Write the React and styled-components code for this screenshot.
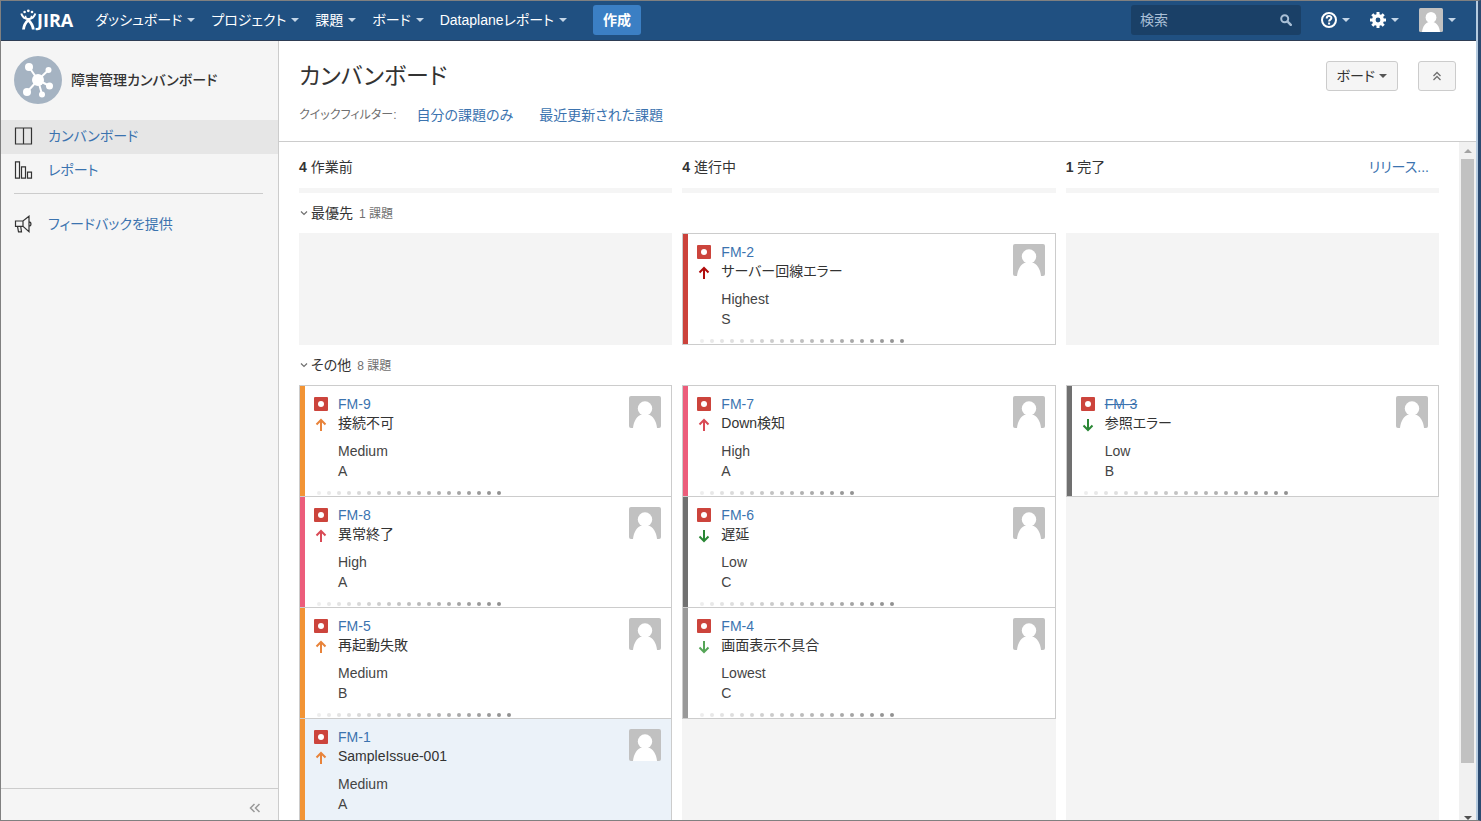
import React from "react";
import styled, { createGlobalStyle } from "styled-components";

const PRIORITIES = {
  highest: { bar: "#cb423b", arrow: "#b00c0c" },
  high: { bar: "#ec5d7b", arrow: "#d94a55" },
  medium: { bar: "#f29435", arrow: "#e8833a" },
  low: { bar: "#707070", arrow: "#2a8735" },
  lowest: { bar: "#999999", arrow: "#55a557" },
};

const NAV = ["ダッシュボード", "プロジェクト", "課題", "ボード", "Dataplaneレポート"];

const COLUMNS = [
  { count: 4, name: "作業前" },
  { count: 4, name: "進行中" },
  { count: 1, name: "完了", release: "リリース..." },
];

const SWIMLANES = [
  {
    name: "最優先",
    count: "1 課題",
    columns: [
      [],
      [{ id: "FM-2", summary: "サーバー回線エラー", priority: "Highest", rank: "S", days: 21 }],
      [],
    ],
  },
  {
    name: "その他",
    count: "8 課題",
    columns: [
      [
        { id: "FM-9", summary: "接続不可", priority: "Medium", rank: "A", days: 19 },
        { id: "FM-8", summary: "異常終了", priority: "High", rank: "A", days: 19 },
        { id: "FM-5", summary: "再起動失敗", priority: "Medium", rank: "B", days: 20 },
        { id: "FM-1", summary: "SampleIssue-001", priority: "Medium", rank: "A", days: 20, selected: true },
      ],
      [
        { id: "FM-7", summary: "Down検知", priority: "High", rank: "A", days: 16 },
        { id: "FM-6", summary: "遅延", priority: "Low", rank: "C", days: 20 },
        { id: "FM-4", summary: "画面表示不具合", priority: "Lowest", rank: "C", days: 20 },
      ],
      [{ id: "FM-3", summary: "参照エラー", priority: "Low", rank: "B", days: 21, done: true }],
    ],
  },
];

function App() {
  return (
    <>
      <GlobalStyle />
      <Window>
        <TopBar />
        <Body>
          <Sidebar />
          <Main>
            <BoardHeader />
            <BoardArea>
              <Board />
              <ScrollTrack>
                <ScrollArrow />
                <ScrollThumb />
                <ScrollArrow $down />
              </ScrollTrack>
            </BoardArea>
          </Main>
        </Body>
      </Window>
    </>
  );
}

export default App;

function TopBar() {
  return (
    <StyledTopBar>
      <Logo href="#home">
        <LogoMark />
        JIRA
      </Logo>
      <Nav>
        {NAV.map((label) => (
          <NavLink href="#menu" key={label}>
            {label}
            <Caret />
          </NavLink>
        ))}
      </Nav>
      <CreateButton type="button">作成</CreateButton>
      <Search>
        <SearchInput type="search" placeholder="検索" aria-label="検索" />
        <svg width="12" height="12" viewBox="0 0 12 12" fill="none" stroke="#a9bfd6" strokeWidth="2">
          <circle cx="4.7" cy="4.7" r="3.5" />
          <path d="M7.4 7.4l3.4 3.4" strokeWidth="2.4" strokeLinecap="round" />
        </svg>
      </Search>
      <IconMenu type="button" aria-label="ヘルプ">
        <HelpIcon />
        <Caret />
      </IconMenu>
      <IconMenu type="button" aria-label="管理">
        <GearIcon />
        <Caret />
      </IconMenu>
      <IconMenu type="button" aria-label="プロフィール">
        <Avatar size={24} />
        <Caret />
      </IconMenu>
    </StyledTopBar>
  );
}

function Sidebar() {
  return (
    <StyledSidebar>
      <Project>
        <ProjectIcon />
        <ProjectName>障害管理カンバンボード</ProjectName>
      </Project>
      <SideLink href="#board" $active>
        <svg width="19" height="18" viewBox="0 0 19 18" fill="none" stroke="#333">
          <path d="M1.500 1h16v16h-16zM9.500 1v16" strokeWidth="1.2" />
        </svg>
        カンバンボード
      </SideLink>
      <SideLink href="#reports">
        <svg width="19" height="18" viewBox="0 0 19 18" fill="none" stroke="#333">
          <path d="M1.500.8h4v16.400h-4zM7.500 5.800h4v11.400h-4zM13.500 11.200h4v6h-4z" strokeWidth="1.2" />
        </svg>
        レポート
      </SideLink>
      <Divider />
      <SideLink href="#feedback">
        <svg width="19" height="18" viewBox="0 0 19 18" fill="none" stroke="#333">
          <path d="M1.500 6h7.500l6-4.800v15.400l-6-5.200H1.500zM9 6v5.400M3.500 11.400l1 5.400h3l-.8-5.400M15 6.800c2.600 0 2.600 4.200 0 4.200" strokeWidth="1.2" />
        </svg>
        フィードバックを提供
      </SideLink>
      <SideFooter>
        <CollapseButton type="button" aria-label="サイドバーを折りたたむ">
          <svg width="12" height="10" viewBox="0 0 12 10" fill="none" stroke="#999" strokeWidth="1.5">
            <path d="M5.500 1L1.500 5l4 4M10.500 1l-4 4 4 4" />
          </svg>
        </CollapseButton>
      </SideFooter>
    </StyledSidebar>
  );
}

function BoardHeader() {
  return (
    <StyledBoardHeader>
      <TitleRow>
        <Title>カンバンボード</Title>
        <ToolButton type="button">
          ボード
          <Caret $dark />
        </ToolButton>
        <ToolButton type="button" aria-label="ヘッダーを隠す">
          <svg width="16" height="10" viewBox="0 0 16 10" fill="none" stroke="#707070" strokeWidth="1.3">
            <path d="M4.500 5L8 1.500 11.500 5M4.500 9L8 5.500 11.500 9" />
          </svg>
        </ToolButton>
      </TitleRow>
      <Filters>
        <FilterLabel>クイックフィルター:</FilterLabel>
        <FilterLinks>
          <TextLink href="#mine">自分の課題のみ</TextLink>
          <TextLink href="#recent">最近更新された課題</TextLink>
        </FilterLinks>
      </Filters>
    </StyledBoardHeader>
  );
}

function Board() {
  return (
    <StyledBoard>
      <Lane>
        {COLUMNS.map((column) => (
          <ColumnHeader key={column.name}>
            <ColumnName>
              <strong>{column.count}</strong> {column.name}
            </ColumnName>
            {column.release && <TextLink href="#release">{column.release}</TextLink>}
          </ColumnHeader>
        ))}
      </Lane>
      {SWIMLANES.map((lane) => (
        <section key={lane.name}>
          <LaneToggle type="button">
            <svg width="10" height="8" viewBox="0 0 10 8" fill="none" stroke="#707070" strokeWidth="1.2">
              <path d="M2 2.500l3 3 3-3" />
            </svg>
            {lane.name}
            <LaneCount>{lane.count}</LaneCount>
          </LaneToggle>
          <Lane>
            {lane.columns.map((issues, index) => (
              <Column key={index}>
                {issues.map((issue) => (
                  <IssueCard key={issue.id} issue={issue} />
                ))}
              </Column>
            ))}
          </Lane>
        </section>
      ))}
    </StyledBoard>
  );
}

function IssueCard({ issue }) {
  const level = issue.priority.toLowerCase();
  return (
    <Card $selected={issue.selected}>
      <Grabber $color={PRIORITIES[level].bar} />
      <CardContent>
        <CardTop>
          <CardIcons>
            <IncidentIcon />
            <PriorityArrow color={PRIORITIES[level].arrow} down={level.startsWith("low")} />
          </CardIcons>
          <CardText>
            <IssueKey href={"#" + issue.id} $done={issue.done}>
              {issue.id}
            </IssueKey>
            <Summary>{issue.summary}</Summary>
            <Field>{issue.priority}</Field>
            <Field>{issue.rank}</Field>
          </CardText>
          <Assignee>
            <Avatar size={32} />
          </Assignee>
        </CardTop>
        <Days>
          {Array.from({ length: issue.days }, (_, i) => (
            <Day key={i} style={{ opacity: 0.16 + (i / issue.days) * 0.84 }} />
          ))}
        </Days>
      </CardContent>
    </Card>
  );
}

// icons

function LogoMark() {
  return (
    <svg width="17" height="22" viewBox="0 0 17 22" fill="none" stroke="#fff">
      <g fill="#fff" stroke="none">
        <circle cx="4.600" cy="3" r="1.300" />
        <circle cx="8.300" cy="1.800" r="1.400" />
        <circle cx="12" cy="3" r="1.300" />
      </g>
      <path d="M1.300 4.500c1 3.500 3.500 5.500 7 5.500s6-2 7-5.500" strokeWidth="2" />
      <path d="M3.500 20.500c.4-5 2.300-7.300 5.500-10M13.300 20.500c-.4-4.500-2.300-7-5.500-10" strokeWidth="2.800" />
      <path d="M5.500 6.800c0 2 1.200 3.400 3 3.400s3-1.400 3-3.400" strokeWidth="1.500" />
    </svg>
  );
}

function HelpIcon() {
  return (
    <svg width="16" height="16" viewBox="0 0 16 16" fill="none" stroke="#fff" strokeWidth="2">
      <circle cx="8" cy="8" r="7" />
      <path d="M5.700 6.400c0-3.200 4.700-3 4.700-.3 0 1.600-2.300 1.500-2.300 3.400M8.100 10.600v1.900" />
    </svg>
  );
}

function GearIcon() {
  return (
    <svg width="16" height="16" viewBox="0 0 16 16" fill="none" stroke="#fff">
      <circle cx="8" cy="8" r="4.200" strokeWidth="3.600" />
      <path
        d="M8 0v3M8 13v3M0 8h3M13 8h3M2.300 2.300l2.200 2.200M11.500 11.500l2.200 2.200M2.300 13.700l2.200-2.200M11.500 4.500l2.200-2.200"
        strokeWidth="3"
      />
    </svg>
  );
}

function Avatar({ size }) {
  return (
    <svg width={size} height={size} viewBox="0 0 32 32">
      <rect width="32" height="32" rx="2" fill="#c1c1c1" />
      <circle cx="16" cy="12.500" r="7.200" fill="#fff" />
      <path d="M4 32c.6-7 4.200-12.500 9-13.500h6c4.800 1 8.400 6.500 9 13.500z" fill="#fff" />
    </svg>
  );
}

function ProjectIcon() {
  return (
    <svg width="48" height="48" viewBox="0 0 48 48">
      <circle cx="24" cy="24" r="24" fill="#a5b3c2" />
      <path d="M24 24L15 11M24 24L34.500 14M24 24L13 36M24 24l11.500 6M24 24l4 14.500" stroke="#fff" strokeWidth="2" />
      <g fill="#fff">
        <circle cx="24" cy="24" r="6" />
        <circle cx="15" cy="11" r="4" />
        <circle cx="34.500" cy="14" r="3" />
        <circle cx="13" cy="36" r="4" />
        <circle cx="35.500" cy="30" r="3.500" />
        <circle cx="28" cy="38.500" r="3" />
      </g>
    </svg>
  );
}

function IncidentIcon() {
  return (
    <svg width="14" height="14" viewBox="0 0 14 14">
      <rect width="14" height="14" rx="1" fill="#cc443c" />
      <circle cx="7" cy="7" r="3" fill="#fff" />
    </svg>
  );
}

function PriorityArrow({ color, down }) {
  return (
    <svg width="14" height="14" viewBox="0 0 14 14" fill="none" stroke={color} strokeWidth="2">
      <path d={down ? "M7 1v11M2.500 7.500L7 12l4.500-4.500" : "M7 13V2M2.500 6.500L7 2l4.500 4.500"} />
    </svg>
  );
}

// styled components

const GlobalStyle = createGlobalStyle`
  * {
    box-sizing: border-box;
  }
  body {
    margin: 0;
    color: #333;
    font: 14px/20px "Liberation Sans", "Noto Sans CJK JP", sans-serif;
    font-feature-settings: "palt";
  }
  button,
  input {
    font: inherit;
    font-feature-settings: inherit;
  }
  a {
    color: #3b73af;
    text-decoration: none;
  }
  svg {
    display: block;
    flex: none;
  }
`;

const Window = styled.div`
  display: flex;
  flex-direction: column;
  height: 100vh;
  overflow: hidden;
  padding-right: 2px;
  border: 1px solid #808080;
  border-right: 3px solid #2c4a70;
  background-color: #b5cbe0;
`;

const StyledTopBar = styled.header`
  display: flex;
  flex: none;
  align-items: center;
  height: 40px;
  padding: 0 20px 1px 19px;
  background-color: #205081;
  border-bottom: 1px solid #2e3d54;
`;

const Logo = styled.a`
  display: flex;
  align-items: center;
  margin-right: 14px;
  color: white;
  font-family: "Open Sans", sans-serif;
  font-size: 18px;
  font-weight: 700;
`;

const Nav = styled.nav`
  display: flex;
`;

const NavLink = styled.a`
  display: flex;
  align-items: center;
  gap: 5px;
  padding: 0 8px;
  color: white;
  white-space: nowrap;
`;

const Caret = styled.span`
  border: 4px solid transparent;
  border-top-color: ${(props) => (props.$dark ? "#555" : "#c4d6e8")};
  border-bottom: 0;
`;

const CreateButton = styled.button`
  height: 30px;
  margin-left: 18px;
  padding: 0 10px;
  border: 0;
  border-radius: 3px;
  background-color: #3b7fc4;
  color: white;
  font-weight: 700;
`;

const Search = styled.div`
  display: flex;
  align-items: center;
  width: 170px;
  height: 30px;
  margin-left: auto;
  margin-right: 10px;
  padding: 0 9px;
  border-radius: 3px;
  background-color: #1a4067;
`;

const SearchInput = styled.input`
  flex: 1;
  min-width: 0;
  padding: 0;
  border: 0;
  outline: 0;
  background: none;
  color: white;
  &::placeholder {
    color: #a9bfd6;
    opacity: 1;
  }
`;

const IconMenu = styled.button`
  display: flex;
  align-items: center;
  gap: 5px;
  padding: 0 10px;
  border: 0;
  background: none;
  &:last-child {
    padding-right: 0;
  }
`;

const Body = styled.div`
  display: flex;
  flex: 1;
  min-height: 0;
`;

const StyledSidebar = styled.aside`
  display: flex;
  flex: none;
  flex-direction: column;
  width: 278px;
  background-color: #f5f5f5;
  border-right: 1px solid #ccc;
`;

const Project = styled.div`
  display: flex;
  align-items: center;
  gap: 9px;
  height: 79px;
  padding: 0 13px 2px;
`;

const ProjectName = styled.strong`
  font-weight: 500;
`;

const SideLink = styled.a`
  display: flex;
  align-items: center;
  gap: 15px;
  height: 34px;
  padding: 0 13px 2px;
  background-color: ${(props) => (props.$active ? "#e6e6e6" : "transparent")};
`;

const Divider = styled.hr`
  align-self: stretch;
  margin: 5px 15px 14px 13px;
  border: 0;
  border-top: 1px solid #ccc;
`;

const SideFooter = styled.div`
  display: flex;
  align-items: center;
  justify-content: flex-end;
  height: 32px;
  margin-top: auto;
  padding: 6px 17px 0;
  border-top: 1px solid #ccc;
`;

const CollapseButton = styled.button`
  display: flex;
  padding: 0;
  border: 0;
  background: none;
`;

const Main = styled.main`
  display: flex;
  flex: 1;
  flex-direction: column;
  min-width: 0;
  background-color: white;
`;

const StyledBoardHeader = styled.div`
  flex: none;
  height: 101px;
  padding: 20px 20px 0;
  border-bottom: 1px solid #ccc;
`;

const TitleRow = styled.div`
  display: flex;
  align-items: center;
  gap: 20px;
`;

const Title = styled.h1`
  flex: 1;
  margin: 0;
  font-size: 23px;
  font-weight: 400;
  line-height: 30px;
`;

const ToolButton = styled.button`
  display: flex;
  align-items: center;
  gap: 4px;
  height: 30px;
  padding: 0 10px;
  border: 1px solid #ccc;
  border-radius: 3px;
  background-color: #f5f5f5;
  color: #333;
`;

const Filters = styled.div`
  display: flex;
  gap: 20px;
  margin-top: 14px;
`;

const FilterLinks = styled.div`
  display: flex;
  gap: 26px;
`;

const FilterLabel = styled.span`
  color: #707070;
  font-size: 12px;
`;

const TextLink = styled.a`
  white-space: nowrap;
`;

const BoardArea = styled.div`
  display: flex;
  flex: 1;
  min-height: 0;
`;

const ScrollTrack = styled.div`
  display: flex;
  flex: none;
  flex-direction: column;
  align-items: center;
  width: 17px;
  padding: 7px 2px 0;
  background-color: #f1f1f1;
`;

const ScrollArrow = styled.span`
  border: 4px solid transparent;
  ${(props) => (props.$down ? "border-top-color: #505050" : "border-bottom-color: #a3a3a3")};
  ${(props) => (props.$down ? "border-bottom: 0" : "border-top: 0")};
  ${(props) => props.$down && "margin-top: auto"};
`;

const ScrollThumb = styled.div`
  align-self: stretch;
  height: 90%;
  margin-top: 6px;
  background-color: #c1c1c1;
`;

const StyledBoard = styled.div`
  display: flex;
  flex: 1;
  flex-direction: column;
  min-width: 0;
  padding: 0 20px;
  overflow: hidden;
`;

const Lane = styled.div`
  display: grid;
  flex: none;
  grid-template-columns: repeat(3, 1fr);
  gap: 10px;
`;

const ColumnHeader = styled.div`
  display: flex;
  justify-content: space-between;
  height: 51px;
  padding: 15px 10px 0 0;
  border-bottom: 5px solid #f5f5f5;
`;

const ColumnName = styled.div`
  white-space: pre;
`;

const Column = styled.div`
  min-height: 112px;
  background-color: #f4f4f4;
`;

const LaneToggle = styled.button`
  display: flex;
  align-items: center;
  gap: 2px;
  height: 40px;
  padding: 0;
  border: 0;
  background: none;
  color: #333;
`;

const LaneCount = styled.span`
  margin-left: 4px;
  padding-top: 2px;
  color: #707070;
  font-size: 12px;
`;

const Card = styled.article`
  display: flex;
  height: 112px;
  border: 1px solid #ccc;
  background-color: ${(props) => (props.$selected ? "#ebf2f9" : "white")};
  & + & {
    height: 111px;
    border-top: 0;
  }
`;

const Grabber = styled.div`
  width: 5px;
  background-color: ${(props) => props.$color};
`;

const CardContent = styled.div`
  flex: 1;
  min-width: 0;
`;

const CardTop = styled.div`
  display: flex;
  align-items: flex-start;
  gap: 10px;
  padding: 9px 10px 0 9px;
`;

const CardIcons = styled.div`
  display: grid;
  gap: 7px;
  padding-top: 2px;
`;

const CardText = styled.div`
  display: flex;
  flex: 1;
  flex-direction: column;
  align-items: flex-start;
`;

const IssueKey = styled.a`
  line-height: 18px;
  text-decoration: ${(props) => (props.$done ? "line-through" : "none")};
`;

const Summary = styled.div`
  margin-bottom: 8px;
`;

const Field = styled.div`
  color: #444;
`;

const Assignee = styled.div`
  padding-top: 1px;
`;

const Days = styled.div`
  display: flex;
  gap: 6px;
  padding: 10px 0 0 12px;
`;

const Day = styled.span`
  width: 4px;
  height: 4px;
  border-radius: 50%;
  background-color: #8c8c8c;
`;
